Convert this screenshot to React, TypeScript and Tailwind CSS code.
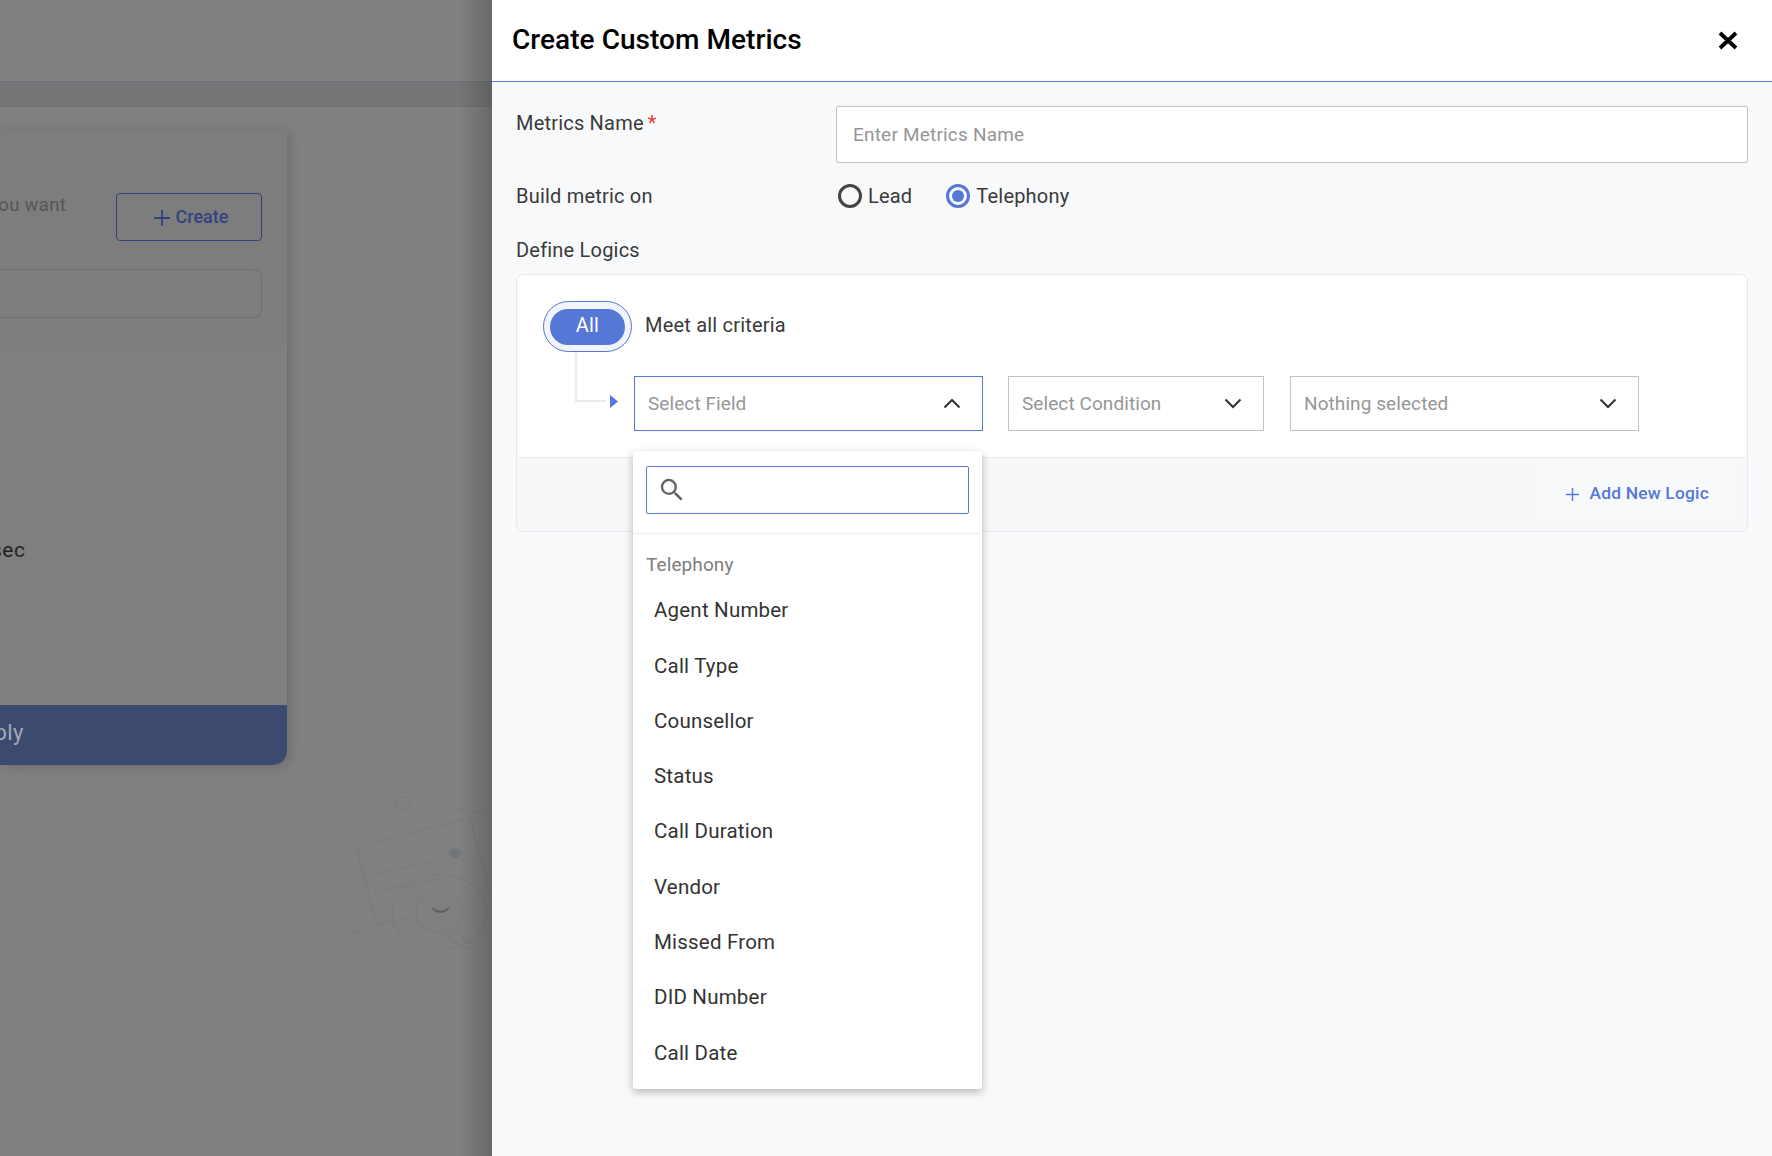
function Chevron({ up = false }: { up?: boolean }) {
  return (
    <svg width="18" height="11" viewBox="0 0 18 11" fill="none" className={up ? "rotate-180" : ""}>
      <path d="M1.5 1.5 9 9l7.5-7.5" stroke="#333333" strokeWidth="2" />
    </svg>
  );
}

function SelectBox({ text, width, open = false, children }: { text: string; width: string; open?: boolean; children?: React.ReactNode }) {
  return (
    <div className={`relative h-[55px] ${width} shrink-0`}>
      <div className={`flex h-full items-center justify-between bg-white pl-[13px] pr-[21px] border ${open ? "border-[#5577d6]" : "border-[#c2c2c2]"}`}>
        <span className="pt-[2px] text-[19px] tracking-[0.08px] text-[#969696]">{text}</span>
        <Chevron up={open} />
      </div>
      {children}
    </div>
  );
}

const options = ["Agent Number", "Call Type", "Counsellor", "Status", "Call Duration", "Vendor", "Missed From", "DID Number", "Call Date"];

function Dropdown() {
  return (
    <div className="absolute left-[-1px] top-[75px] z-10 h-[638px] w-[349px] rounded-[3px] bg-white shadow-[0_3px_8px_rgba(0,0,0,0.28)]">
      <div className="border-b border-[#ececec] px-[13px] pt-[15px] pb-[19px]">
        <div className="flex h-[48px] items-center rounded-[2px] border border-[#5577d6] pl-[10px]">
          <svg width="30" height="30" viewBox="0 0 24 24" fill="#666666">
            <path d="M15.5 14h-.79l-.28-.27A6.471 6.471 0 0 0 16 9.5 6.5 6.5 0 1 0 9.5 16c1.61 0 3.09-.59 4.23-1.57l.27.28v.79l5 4.99L20.49 19l-4.99-5zm-6 0C7.01 14 5 11.99 5 9.5S7.01 5 9.5 5 14 7.01 14 9.5 11.99 14 9.5 14z" />
          </svg>
        </div>
      </div>
      <div className="pl-[13px] pt-[17px] text-[19px] leading-[28px] tracking-[0.1px] text-[#7d7d7d]">Telephony</div>
      <ul className="pl-[21px] pt-[4px]">
        {options.map((o) => (
          <li key={o} className="flex h-[55.3px] items-center text-[20.5px] tracking-[0.2px] text-[#333333]">{o}</li>
        ))}
      </ul>
    </div>
  );
}

function Backdrop() {
  return (
    <div className="relative flex h-full w-[492px] shrink-0 flex-col overflow-hidden bg-[#808080] text-[20px]">
      <div className="h-[81px] shrink-0" />
      <div className="h-[26px] shrink-0 border-y border-[#6f7176] bg-[#747678]" />
      <div className="mt-[23px] flex h-[635px] w-[287px] flex-col rounded-b-[14px] bg-[#7f7f7f] shadow-[2px_2px_12px_rgba(0,0,0,0.18)]">
        <div className="h-[215px] shrink-0 bg-[#7d7d7d] pr-[25px]">
          <div className="flex justify-end pt-[63px]">
            <span className="mr-[50px] whitespace-nowrap text-[18.5px] leading-[24px] tracking-[0.3px] text-[#555555]">you want</span>
            <div className="flex h-[48px] w-[146px] shrink-0 items-center justify-center gap-[6px] rounded-[4px] border border-[#32437f] pb-[2px] pl-[4px] text-[18px] font-medium text-[#32437f]">
              <svg width="16" height="16" viewBox="0 0 16 16" className="mt-[4px]" fill="none" stroke="#32437f" strokeWidth="1.8"><path d="M8 0v16M0 8h16" /></svg>
              <span>Create</span>
            </div>
          </div>
          <div className="mt-[28px] h-[49px] rounded-r-[8px] border-y border-r border-[#6f6f6f]" />
        </div>
        <div className="flex-1 overflow-hidden">
          <div className="ml-[-9px] pt-[191px] text-[21px] leading-[28px] tracking-[0.5px] text-[#222222]">sec</div>
        </div>
        <div className="flex h-[60px] shrink-0 items-center justify-end overflow-hidden rounded-br-[14px] bg-[#3c4a70] pb-[6px] pr-[263px] text-[22px] tracking-[0.5px] text-[#a3a8b4]">
          <span className="whitespace-nowrap">Apply</span>
        </div>
      </div>
      <svg className="absolute left-[340px] top-[790px]" width="152" height="170" viewBox="340 790 152 170" fill="none" stroke="#7a7a7a" strokeWidth="1.2">
        <ellipse cx="402" cy="803" rx="8" ry="6" transform="rotate(-15 402 803)" />
        <circle cx="356" cy="927" r="5" />
        <path d="M356 847 470 818l20 75M356 847l21 77 32-6" />
        <path d="M455 808l37 7M370 875l70-15M373 892l68-14" />
        <ellipse cx="439" cy="912" rx="47" ry="38" />
        <ellipse cx="439" cy="912" rx="23" ry="20" />
        <path d="M450 930l24 15-6 5-24-15" />
        <path d="M431 906a10 10 0 0 0 19 0a11 9 0 0 1-19 0z" fill="#5f5f5f" stroke="none" />
        <ellipse cx="455" cy="853" rx="6" ry="5" fill="#73757c" stroke="none" />
      </svg>
      <div className="pointer-events-none absolute inset-y-0 right-0 w-[32px] bg-gradient-to-r from-transparent to-[#00000030]" />
    </div>
  );
}

export default function App() {
  return (
    <div className="flex h-[1156px] w-[1772px] overflow-hidden font-['Roboto',sans-serif]">
      <Backdrop />
      <div className="flex h-full flex-1 flex-col bg-[#f8f9fb]">
        <div className="flex h-[82px] shrink-0 items-center justify-between border-b border-[#5577d6] bg-white pb-[1px] pl-[20px] pr-[34px]">
          <h1 className="text-[28px] font-medium tracking-[0.05px] text-black">Create Custom Metrics</h1>
          <svg width="20" height="19" viewBox="0 0 20 19" fill="none" stroke="#000000" strokeWidth="3.8"><path d="M2 2l16 15M18 2 2 17" /></svg>
        </div>

        <div className="px-[24px] text-[20px] tracking-[0.2px] text-[#3a3a3a]">
          <div className="mt-[24px] flex items-start">
            <label className="mt-[4px] w-[320px] shrink-0 leading-[26px]">
              Metrics Name<span className="ml-[4px] text-[#ee3a2f]">*</span>
            </label>
            <input
              placeholder="Enter Metrics Name"
              className="h-[57px] flex-1 rounded-[2px] border border-[#c2c2c2] bg-white pl-[16px] text-[19px] tracking-[0.2px] outline-none placeholder:text-[#969696]"
            />
          </div>

          <div className="mt-[20px] flex h-[26px] items-center">
            <span className="w-[322px] shrink-0">Build metric on</span>
            <div className="flex items-center gap-[6px]">
              <span className="h-[24px] w-[24px] rounded-full border-[3px] border-[#444444]" />
              <span>Lead</span>
            </div>
            <div className="ml-[34px] flex items-center gap-[6px]">
              <span className="flex h-[24px] w-[24px] items-center justify-center rounded-full border-[3px] border-[#5577d6]">
                <span className="h-[12px] w-[12px] rounded-full bg-[#5577d6]" />
              </span>
              <span>Telephony</span>
            </div>
          </div>

          <div className="mt-[28px] h-[26px] leading-[26px]">Define Logics</div>

          <div className="mt-[11px] rounded-[8px] border border-[#e6e8ec] bg-white">
            <div className="px-[26px] pt-[26px]">
              <div className="flex items-center gap-[13px]">
                <div className="flex h-[51px] w-[89px] items-center justify-center rounded-full border border-[#5577d6] bg-[#f1f4fb]">
                  <span className="flex h-[36px] w-[75px] items-center justify-center rounded-full bg-[#5577d6] pb-[3px] text-white">All</span>
                </div>
                <span className="mb-[3px]">Meet all criteria</span>
              </div>
            </div>
            <div className="flex items-start pb-[26px] pr-[26px] pt-[24px]">
              <div className="relative h-[55px] w-[117px] shrink-0">
                <div className="absolute left-[58px] top-[-24px] h-[50px] w-[31px] border-b-2 border-l-2 border-[#e8eaee]" />
                <svg className="absolute left-[93px] top-[19px]" width="8" height="13" viewBox="0 0 8 13" fill="#5577d6"><path d="M0 0l8 6.5L0 13z" /></svg>
              </div>
              <SelectBox text="Select Field" width="w-[349px]" open>
                <Dropdown />
              </SelectBox>
              <div className="ml-[25px]"><SelectBox text="Select Condition" width="w-[256px]" /></div>
              <div className="ml-[26px]"><SelectBox text="Nothing selected" width="w-[349px]" /></div>
            </div>
            <div className="flex h-[74px] justify-end rounded-b-[8px] border-t border-[#e6e8ec] bg-[#f7f8fa] pr-[11px] pt-[13px]">
              <div className="flex h-[47px] w-[200px] items-center justify-end gap-[10px] rounded-[4px] bg-[#f8f9fb] pb-[2px] pr-[27px] text-[17.4px] font-medium text-[#5577d6]">
                <svg width="13" height="13" viewBox="0 0 13 13" className="mt-[2px]" fill="none" stroke="#5577d6" strokeWidth="1.4"><path d="M6.5 0v13M0 6.5h13" /></svg>
                <span>Add New Logic</span>
              </div>
            </div>
          </div>
        </div>
      </div>
    </div>
  );
}
